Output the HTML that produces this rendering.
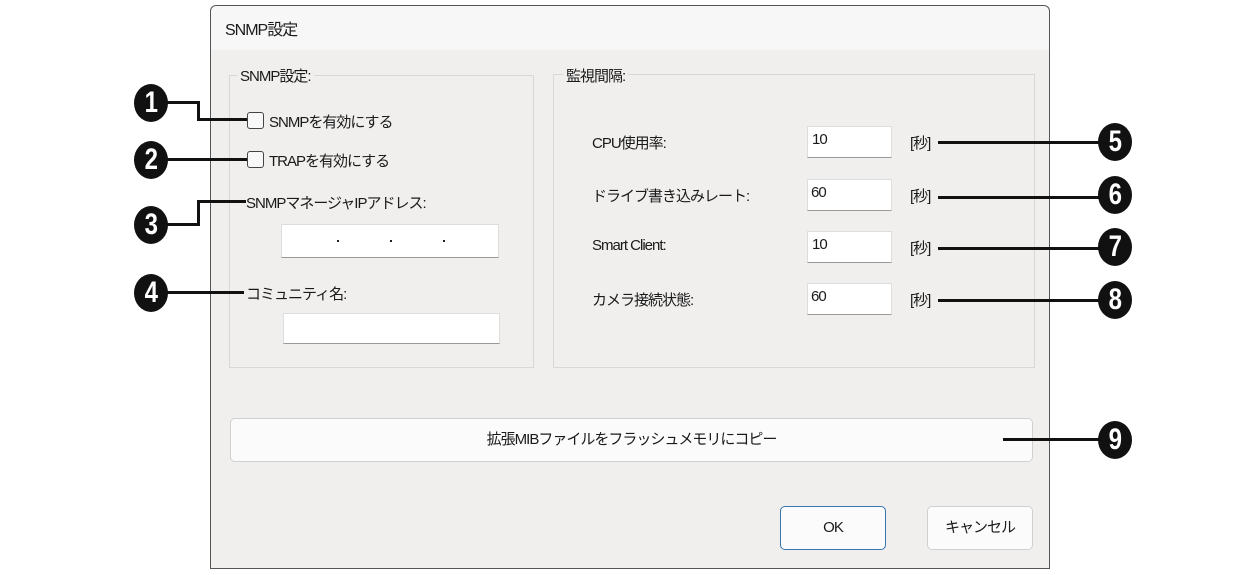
<!DOCTYPE html>
<html><head><meta charset="utf-8"><style>
*{margin:0;padding:0;box-sizing:border-box}
body{width:1240px;height:575px;background:#fff;position:relative;overflow:hidden;font-family:"Liberation Sans","Noto Sans CJK JP",sans-serif;font-size:15px;color:#1a1a1a;letter-spacing:-1px}
.a{position:absolute;white-space:nowrap}
.dlg{left:210px;top:5px;width:840px;height:564px;background:#f0efee;border:1px solid #555;border-radius:6px 6px 0 0}
.title{left:211px;top:6px;width:838px;height:44px;background:#f7f7f7;border-radius:6px 6px 0 0}
.grp{border:1px solid #d8d8d8}
.inp{background:#fff;border:1px solid #ddd;border-bottom:1px solid #999}
.cb{width:17px;height:17px;border:1px solid #444;border-radius:3px;background:#f8f8f8}
.btn{background:#fbfbfb;border:1px solid #d0d0d0;border-radius:5px;text-align:center}
.n{width:34px;height:38px;border-radius:50%;background:#111;color:#fff;font-weight:bold;font-size:30px;text-align:center;line-height:38px;letter-spacing:0}
.n span{display:inline-block;transform:scaleX(0.8)}
.h{height:3px;background:#111}
.v{width:3px;background:#111}
.lab{background:#f0efee;padding:0 3px}
</style></head><body>
<div class="a dlg"></div>
<div class="a title"></div>
<div class="a" style="left:225px;top:16px;font-size:16px">SNMP設定</div>

<div class="a grp" style="left:229px;top:75px;width:305px;height:293px"></div>
<div class="a lab" style="left:237px;top:65px">SNMP設定:</div>
<div class="a grp" style="left:553px;top:74px;width:482px;height:294px"></div>
<div class="a lab" style="left:563px;top:65px">監視間隔:</div>

<div class="a cb" style="left:247px;top:112px"></div>
<div class="a" style="left:269px;top:111px">SNMPを有効にする</div>
<div class="a cb" style="left:247px;top:151px"></div>
<div class="a" style="left:269px;top:150px">TRAPを有効にする</div>
<div class="a" style="left:246px;top:192px">SNMPマネージャIPアドレス:</div>
<div class="a inp" style="left:281px;top:224px;width:218px;height:34px"></div>
<div class="a" style="left:337px;top:240px;width:2px;height:2px;background:#222"></div>
<div class="a" style="left:390px;top:240px;width:2px;height:2px;background:#222"></div>
<div class="a" style="left:443px;top:240px;width:2px;height:2px;background:#222"></div>
<div class="a" style="left:246px;top:283px">コミュニティ名:</div>
<div class="a inp" style="left:283px;top:313px;width:217px;height:31px"></div>

<div class="a" style="left:592px;top:132px">CPU使用率:</div>
<div class="a" style="left:592px;top:185px">ドライブ書き込みレート:</div>
<div class="a" style="left:592px;top:237px">Smart Client:</div>
<div class="a" style="left:592px;top:289px">カメラ接続状態:</div>
<div class="a inp" style="left:807px;top:126px;width:85px;height:32px"></div>
<div class="a inp" style="left:807px;top:179px;width:85px;height:32px"></div>
<div class="a inp" style="left:807px;top:231px;width:85px;height:32px"></div>
<div class="a inp" style="left:807px;top:283px;width:85px;height:32px"></div>
<div class="a" style="left:812px;top:131px">10</div>
<div class="a" style="left:811px;top:184px">60</div>
<div class="a" style="left:812px;top:236px">10</div>
<div class="a" style="left:811px;top:288px">60</div>
<div class="a" style="left:910px;top:132px">[秒]</div>
<div class="a" style="left:910px;top:185px">[秒]</div>
<div class="a" style="left:910px;top:237px">[秒]</div>
<div class="a" style="left:910px;top:289px">[秒]</div>

<div class="a btn" style="left:230px;top:418px;width:803px;height:44px;line-height:42px">拡張MIBファイルをフラッシュメモリにコピー</div>
<div class="a btn" style="left:780px;top:506px;width:106px;height:44px;line-height:42px;border:1px solid #3a76b0">OK</div>
<div class="a btn" style="left:927px;top:506px;width:106px;height:44px;line-height:42px">キャンセル</div>

<div class="a n" style="left:134px;top:84px"><span>1</span></div>
<div class="a n" style="left:134px;top:141px"><span>2</span></div>
<div class="a n" style="left:134px;top:206px"><span>3</span></div>
<div class="a n" style="left:134px;top:274px"><span>4</span></div>
<div class="a n" style="left:1098px;top:123px"><span>5</span></div>
<div class="a n" style="left:1098px;top:176px"><span>6</span></div>
<div class="a n" style="left:1098px;top:228px"><span>7</span></div>
<div class="a n" style="left:1098px;top:281px"><span>8</span></div>
<div class="a n" style="left:1098px;top:421px"><span>9</span></div>

<div class="a h" style="left:166px;top:101px;width:34px"></div>
<div class="a v" style="left:197px;top:101px;height:20px"></div>
<div class="a h" style="left:197px;top:118px;width:50px"></div>
<div class="a h" style="left:166px;top:158px;width:81px"></div>
<div class="a h" style="left:166px;top:223px;width:34px"></div>
<div class="a v" style="left:197px;top:200px;height:26px"></div>
<div class="a h" style="left:197px;top:200px;width:49px"></div>
<div class="a h" style="left:166px;top:291px;width:78px"></div>
<div class="a h" style="left:938px;top:141px;width:162px"></div>
<div class="a h" style="left:938px;top:196px;width:162px"></div>
<div class="a h" style="left:938px;top:247px;width:162px"></div>
<div class="a h" style="left:938px;top:299px;width:162px"></div>
<div class="a h" style="left:1003px;top:438px;width:97px"></div>
</body></html>
